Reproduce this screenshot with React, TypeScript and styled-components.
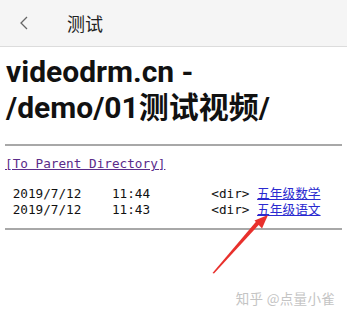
import React from "react";
import styled, { createGlobalStyle } from "styled-components";

const Global = createGlobalStyle`
  html, body { margin: 0; padding: 0; background: #fff; }
  body { width: 347px; height: 317px; overflow: hidden; }
`;

const Page = styled.div`
  position: relative;
  width: 347px;
  height: 317px;
  background: #fff;
  font-family: Roboto, "Noto Sans CJK SC", sans-serif;
`;

const TopBar = styled.header`
  height: 46px;
  background: #f5f5f5;
  border-bottom: 1px solid #dcdcdc;
  display: flex;
  align-items: center;
  padding-left: 19px;
  gap: 38px;
`;

const BackIcon = styled.svg`
  width: 10px;
  height: 14px;
  flex: none;
`;

const BarTitle = styled.span`
  font-family: "Noto Sans CJK SC", sans-serif;
  font-size: 18px;
  color: #222;
  line-height: 1;
`;

const Content = styled.main`
  padding: 0 5px;
`;

const Heading = styled.h1`
  margin: 7px 0 18px 1px;
  font-family: Roboto, "Noto Sans CJK SC", sans-serif;
  font-weight: 700;
  font-size: 30px;
  line-height: 36px;
  color: #111;
`;

const Rule = styled.hr`
  margin: 0;
  border: none;
  border-top: 2px solid #a8a8a8;
`;

const Listing = styled.div`
  margin: 10px 0 11px;
  display: flex;
  flex-direction: column;
`;

const Row = styled.div<{ $gap?: number }>`
  height: 16px;
  margin-bottom: ${(p) => p.$gap ?? 0}px;
  white-space: pre;
  font-family: "DejaVu Sans Mono", "Noto Sans CJK SC", monospace;
  font-size: 12.7px;
  line-height: 16px;
  color: #111;
`;

const DirLink = styled.a<{ $visited?: boolean }>`
  color: ${(p) => (p.$visited ? "#5b2c8a" : "#2a2ad0")};
  text-decoration: underline;
  line-height: 16px;
  font-family: ${(p) =>
    p.$visited ? `"DejaVu Sans Mono", monospace` : `"Noto Sans CJK SC", sans-serif`};
`;

const Arrow = styled.svg`
  position: absolute;
  left: 0;
  top: 0;
  width: 347px;
  height: 317px;
  pointer-events: none;
`;

const Watermark = styled.div`
  position: absolute;
  right: 12px;
  top: 288px;
  font-family: "Noto Sans CJK SC", sans-serif;
  font-size: 13.5px;
  color: #c4c4c4;
  letter-spacing: 0.3px;
`;

const entries = [
  { date: "2019/7/12", time: "11:44", name: "五年级数学" },
  { date: "2019/7/12", time: "11:43", name: "五年级语文" },
];

export default function App() {
  return (
    <Page>
      <Global />
      <TopBar>
        <BackIcon viewBox="0 0 10 14">
          <polyline points="8,1 2,7 8,13" fill="none" stroke="#666" strokeWidth="1.3" />
        </BackIcon>
        <BarTitle>测试</BarTitle>
      </TopBar>
      <Content>
        <Heading>
          videodrm.cn -<br />/demo/01测试视频/
        </Heading>
        <Rule />
        <Listing>
          <Row $gap={13}>
            <DirLink $visited href="#">[To Parent Directory]</DirLink>
          </Row>
          {entries.map((e) => (
            <Row key={e.name}>
              {` ${e.date}    ${e.time}        <dir> `}
              <DirLink href="#">{e.name}</DirLink>
            </Row>
          ))}
        </Listing>
        <Rule />
      </Content>
      <Arrow viewBox="0 0 347 317">
        <polygon points="212.5,273 214,273.5 260,223.5 257,220.5" fill="#e8302c" />
        <polygon points="268,215 254.5,220.5 262,228.5" fill="#e8302c" />
      </Arrow>
      <Watermark>知乎 @点量小雀</Watermark>
    </Page>
  );
}
